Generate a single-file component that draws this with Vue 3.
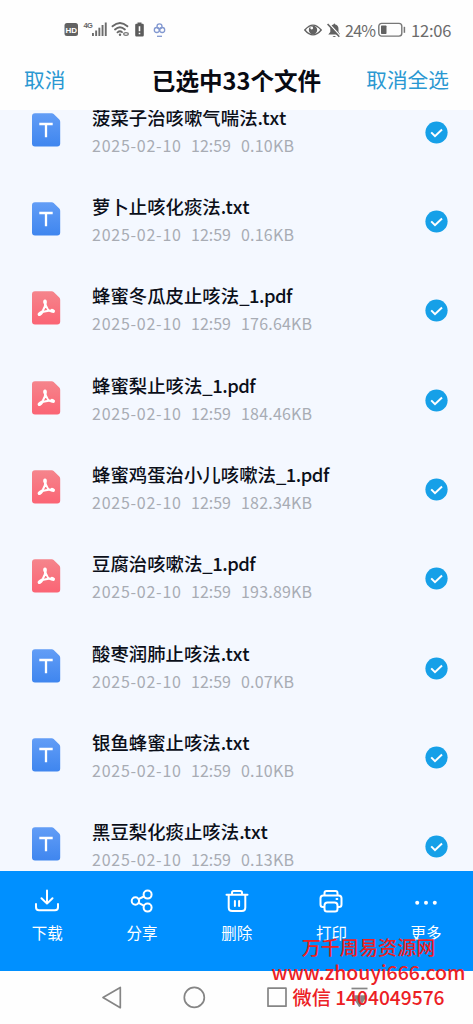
<script setup>
const files = [
  ['菠菜子治咳嗽气喘法', '.txt', '0.10KB'],
  ['萝卜止咳化痰法', '.txt', '0.16KB'],
  ['蜂蜜冬瓜皮止咳法', '_1.pdf', '176.64KB'],
  ['蜂蜜梨止咳法', '_1.pdf', '184.46KB'],
  ['蜂蜜鸡蛋治小儿咳嗽法', '_1.pdf', '182.34KB'],
  ['豆腐治咳嗽法', '_1.pdf', '193.89KB'],
  ['酸枣润肺止咳法', '.txt', '0.07KB'],
  ['银鱼蜂蜜止咳法', '.txt', '0.10KB'],
  ['黑豆梨化痰止咳法', '.txt', '0.13KB'],
].map(([stem, ext, size]) => ({ stem, ext, size, pdf: ext.endsWith('pdf') }))
</script>

<template>
  <div class="screen">
    <div class="status">
      <svg class="status-left" width="110" height="20" viewBox="0 0 110 20">
        <rect x="1.5" y="3" width="13.5" height="13" rx="2.5" fill="#626262" />
        <text x="8.2" y="13" class="hd" text-anchor="middle">HD</text>
        <text x="20.5" y="8" class="g4">4G</text>
        <g fill="#6c6c6c">
          <rect x="29" y="13" width="1.9" height="3" /><rect x="32.2" y="10.5" width="1.9" height="5.5" />
          <rect x="35.4" y="7.7" width="1.9" height="8.3" /><rect x="38.6" y="5" width="1.9" height="11" />
          <rect x="41.8" y="2.5" width="1.9" height="13.5" />
        </g>
        <g fill="none" stroke="#686868" stroke-width="1.8" stroke-linecap="round">
          <path d="M49.5 6.3Q57-.2 64.4 6.3M52 9.5Q57 5 61.9 9.5M54.5 12.4Q57 10.3 59 12.2" />
        </g>
        <circle cx="57" cy="14.8" r="1.2" fill="#686868" />
        <ellipse cx="63" cy="14" rx="2.3" ry="1.3" fill="none" stroke="#777" stroke-width="1.2" />
        <path d="M74.5 2.5h4v1.3h1.2q1.1 0 1.1 1.1v10.4q0 1.2-1.2 1.2h-6.2q-1.2 0-1.2-1.2V4.9q0-1.1 1.1-1.1h1.2z" fill="#5c5c5c" />
        <path d="M76.5 6.3v5M76.5 12.7v1.5" stroke="#fff" stroke-width="1.6" />
        <g fill="none" stroke="#8298d0" stroke-width="1.3">
          <circle cx="96.5" cy="6.3" r="2.5" /><circle cx="93.8" cy="10" r="2.5" /><circle cx="99.2" cy="10" r="2.5" />
          <path d="M94 16.3h5" />
        </g>
      </svg>
      <div class="status-right">
        <svg width="36" height="18" viewBox="0 0 36 18">
          <path d="M.8 9Q9-.8 17.2 9 9 18.8.8 9z" fill="none" stroke="#626262" stroke-width="1.4" />
          <circle cx="9" cy="9" r="4.2" fill="#626262" /><circle cx="7.7" cy="7" r="1.4" fill="#fff" />
          <path d="M24.3 13.5h12l-1.8-2.5V8q0-4-3.2-4.6-.8-1.7-1.9 0-3.1.6-3.1 4.6v3zM28.5 15h3.5q-1.7 2.2-3.5 0z" fill="#626262" />
          <path d="M24.8 2.5 36 14.5" stroke="#fff" stroke-width="1.3" /><path d="M23.6 3 35.3 15.7" stroke="#626262" stroke-width="1.6" />
        </svg>
        <span class="pct">24%</span>
        <svg class="battery" width="29" height="16" viewBox="0 0 29 16">
          <rect x=".8" y="1.4" width="23" height="12.7" rx="2.8" fill="none" stroke="#777" stroke-width="1.4" />
          <rect x="3" y="3.6" width="5.5" height="8.3" rx=".7" fill="#626262" /><path d="M26.4 4.8v6" stroke="#777" stroke-width="1.5" />
        </svg>
        <span class="clock">12:06</span>
      </div>
    </div>

    <header class="header">
      <span class="action">取消</span>
      <h1>已选中33个文件</h1>
      <span class="action all">取消全选</span>
    </header>

    <main class="list">
      <div class="rows">
        <div v-for="f in files" :key="f.stem" class="row">
          <svg class="file" width="29" height="34" viewBox="0 0 29 34">
            <defs>
              <linearGradient id="blue" x2="0" y2="1"><stop stop-color="#629df6" /><stop offset="1" stop-color="#3f86ef" /></linearGradient>
              <linearGradient id="red" x2="0" y2="1"><stop stop-color="#f5858c" /><stop offset="1" stop-color="#fb6474" /></linearGradient>
            </defs>
            <path d="M3 .3h16.7q1.2 0 2 .8l5.6 5.5q.9.9.9 2.2v21.7q0 3-3 3H3q-3 0-3-3V3.3q0-3 3-3z" :fill="f.pdf ? 'url(#red)' : 'url(#blue)'" />
            <path v-if="!f.pdf" d="M7.3 11h13.4M14 11v13.3" fill="none" stroke="#fff" stroke-width="2.3" />
            <g v-else fill="none" stroke="#fff" stroke-linecap="round" stroke-linejoin="round">
              <path d="M13 9.8Q13.4 15 15.8 18.2T21.3 20M13.2 10.5Q13.6 15.5 10.8 19.6L7 23.4M9 22Q13 19.6 20.3 19.5" stroke-width="1.9" />
              <path d="M13 10.2v1.2M7.4 23.2l1.6-1.1M20.2 19.7l1 .4" stroke-width="3.6" />
            </g>
          </svg>
          <div class="info">
            <div class="name"><span class="stem">{{ f.stem }}</span><span class="ext" :class="{ pdf: f.pdf }">{{ f.ext }}</span></div>
            <div class="meta"><span class="date">2025-02-10</span><span class="time">12:59</span><span class="size">{{ f.size }}</span></div>
          </div>
          <svg class="check" width="23" height="23" viewBox="0 0 23 23">
            <circle cx="11.5" cy="11.5" r="11.1" fill="#16a0e8" />
            <path d="m6.2 11.4 3.8 3.8 7-6.7" fill="none" stroke="#fff" stroke-width="2" />
          </svg>
        </div>
      </div>
    </main>

    <nav class="toolbar">
      <div class="tool">
        <svg width="26" height="26" viewBox="0 0 26 26"><path d="M13 2.5v13M7.5 10.2 13 15.6l5.5-5.4M2 16v3.2q0 3 3 3h16q3 0 3-3V16" /></svg>
        <span>下载</span>
      </div>
      <div class="tool">
        <svg width="26" height="26" viewBox="0 0 26 26"><circle cx="6.4" cy="13" r="3.7" /><circle cx="18.6" cy="6.6" r="4" /><circle cx="18.6" cy="19.6" r="4" /><path d="m9.6 11.2 5.2-2.7M9.6 14.8l5.2 2.8" /></svg>
        <span>分享</span>
      </div>
      <div class="tool">
        <svg width="26" height="26" viewBox="0 0 26 26"><path d="M2.5 6.8h21M8 6.5V4.7Q8 3 9.7 3h6.6Q18 3 18 4.700v1.8M4.700 6.8v12.700q0 3.500 3.500 3.500h9.600q3.500 0 3.500-3.500V6.8M10.900 13v5M15.100 13v5" /></svg>
        <span>删除</span>
      </div>
      <div class="tool">
        <svg width="26" height="26" viewBox="0 0 26 26"><path d="M6.5 7.5V5q0-2 2-2h9q2 0 2 2v2.5M6.5 19H5q-2.500 0-2.500-2.500v-6.200Q2.500 7.500 5.300 7.500h15.400q2.800 0 2.800 2.800v6.200q0 2.500-2.500 2.500h-1.500M6.500 17.500q0-3 3-3h7q3 0 3 3V21q0 2.500-2.500 2.500H9q-2.500 0-2.500-2.500zM18.500 11h.8" /></svg>
        <span>打印</span>
      </div>
      <div class="tool">
        <svg width="26" height="26" viewBox="0 0 26 26"><g fill="#fff" stroke="none"><circle cx="4.2" cy="14.8" r="2" /><circle cx="13" cy="14.8" r="2" /><circle cx="21.8" cy="14.8" r="2" /></g></svg>
        <span>更多</span>
      </div>
    </nav>

    <footer class="system">
      <svg width="473" height="53" viewBox="0 0 473 53" fill="none" stroke="#858585" stroke-width="1.7" stroke-linejoin="round">
        <path d="M120.3 16.500v20.200L103 26.500z" /><circle cx="194.3" cy="26.4" r="10" />
        <rect x="268" y="17.2" width="18" height="18" /><path d="M351.500 17.500h16" />
        <path d="M353 25h13l-6.500 10z" fill="#858585" />
      </svg>
    </footer>

    <div class="watermark">
      <div class="site">万千周易资源网</div>
      <div class="url">www.zhouyi666.com</div>
      <div class="wechat">微信 1404049576</div>
    </div>
  </div>
</template>

<style>
body { margin: 0; background: #fefefe; }
</style>

<style scoped>
.screen { position: relative; width: 473px; height: 1024px; overflow: hidden; display: flex; flex-direction: column; background: #fefefe; font-family: "Noto Sans CJK SC", sans-serif; white-space: nowrap; }
svg { display: block; flex: none; }
.status { height: 50px; box-sizing: border-box; padding: 20px 22px 0 63px; display: flex; justify-content: space-between; align-items: flex-start; }
.hd { font: 700 8px "Liberation Sans", sans-serif; fill: #fff; }
.g4 { font: 700 7.5px "Liberation Sans", sans-serif; letter-spacing: -.6px; fill: #666; }
.status-right { display: flex; align-items: center; height: 19px; color: #6b6b6b; }
.pct { margin-left: 5px; width: 33px; font-size: 16px; letter-spacing: -.7px; }
.clock { margin-left: 4px; width: 40px; font-size: 16.5px; letter-spacing: -.2px; }
.header { height: 60px; display: grid; grid-template-columns: 1fr auto 1fr; align-items: center; padding: 0 24px; box-sizing: border-box; }
.header h1 { margin: 0; font-size: 23.6px; line-height: 34px; font-weight: 700; color: #080a12; }
.action { font-size: 20.7px; color: #2a98d2; line-height: 30px; padding-bottom: 3px; }
.all { text-align: right; }
.list { height: 761px; overflow: hidden; background: #f4f8ff; }
.rows { margin-top: -24.9px; }
.row { height: 89.3px; display: flex; align-items: center; padding: 0 25px 0 32px; }
.info { flex: 1; margin-left: 31px; display: flex; flex-direction: column; gap: 4px; }
.name { height: 26px; line-height: 26px; font-size: 18.4px; font-weight: 500; color: #0b0f19; display: flex; }
.ext { letter-spacing: .3px; }
.ext.pdf { letter-spacing: -.5px; }
.meta { height: 22px; line-height: 22px; font-size: 16px; color: #a8acb4; display: grid; grid-template-columns: 99px 50px auto; }
.date { letter-spacing: .75px; }
.size { letter-spacing: .2px; }
.check { margin-top: 5px; }
.toolbar { height: 99.5px; background: #0090ff; display: grid; grid-template-columns: repeat(5, 94.7px); color: #fff; }
.tool { display: flex; flex-direction: column; align-items: center; padding-top: 17px; font-size: 15.5px; gap: 6px; }
.tool span { line-height: 24px; }
.tool svg { fill: none; stroke: #fff; stroke-width: 2; stroke-linecap: round; stroke-linejoin: round; }
.system { height: 53.5px; }
.watermark { position: absolute; left: 270px; top: 933px; width: 197px; color: #ec2024; font-weight: 500; display: flex; flex-direction: column; align-items: center; }
.site { height: 28px; line-height: 28px; font-size: 19.1px; }
.url { height: 24px; line-height: 22px; font-size: 19.5px; }
.wechat { height: 26px; line-height: 25px; font-size: 19.200px; }
</style>
